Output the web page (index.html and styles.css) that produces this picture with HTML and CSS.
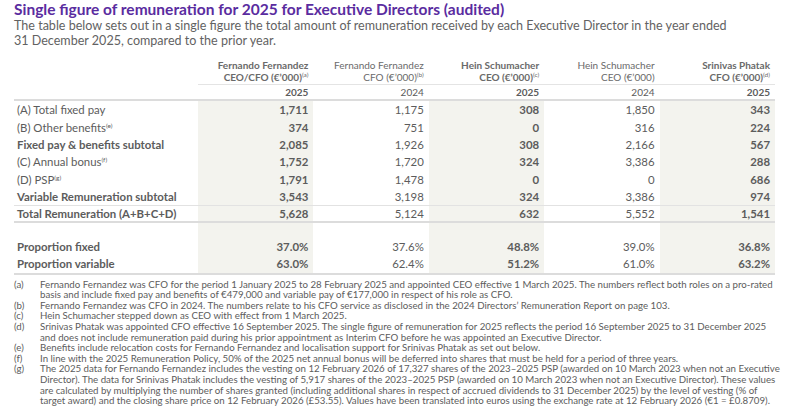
FILE: index.html
```html
<!DOCTYPE html>
<html lang="en">
<head>
<meta charset="utf-8">
<title>Single figure of remuneration</title>
<link rel="stylesheet" href="styles.css">
</head>
<body>
<div class="page">
  <h1 class="title">Single figure of remuneration for 2025 for Executive Directors (audited)</h1>
  <p class="intro">The table below sets out in a single figure the total amount of remuneration received by each Executive Director in the year ended<br>31 December 2025, compared to the prior year.</p>

  <table class="rem">
    <colgroup>
      <col class="c-label"><col><col><col><col><col>
    </colgroup>
    <thead>
      <tr class="names">
        <th class="blank"></th>
        <th class="hd strong">Fernando Fernandez<br>CEO/CFO (€’000)<sup>(a)</sup></th>
        <th class="hd">Fernando Fernandez<br>CFO (€’000)<sup>(b)</sup></th>
        <th class="hd strong">Hein Schumacher<br>CEO (€’000)<sup>(c)</sup></th>
        <th class="hd">Hein Schumacher<br>CEO (€’000)</th>
        <th class="hd strong">Srinivas Phatak<br>CFO (€’000)<sup>(d)</sup></th>
      </tr>
      <tr class="years">
        <th class="blank"></th>
        <th class="yr strong">2025</th>
        <th class="yr">2024</th>
        <th class="yr strong">2025</th>
        <th class="yr">2024</th>
        <th class="yr strong">2025</th>
      </tr>
    </thead>
    <tbody>
      <tr class="row">
        <td class="lbl">(A) Total fixed pay</td>
        <td class="num cur">1,711</td><td class="num">1,175</td><td class="num cur">308</td><td class="num">1,850</td><td class="num cur">343</td>
      </tr>
      <tr class="row">
        <td class="lbl">(B) Other benefits<sup>(e)</sup></td>
        <td class="num cur">374</td><td class="num">751</td><td class="num cur">0</td><td class="num">316</td><td class="num cur">224</td>
      </tr>
      <tr class="row">
        <td class="lbl bold">Fixed pay &amp; benefits subtotal</td>
        <td class="num cur">2,085</td><td class="num">1,926</td><td class="num cur">308</td><td class="num">2,166</td><td class="num cur">567</td>
      </tr>
      <tr class="row">
        <td class="lbl">(C) Annual bonus<sup>(f)</sup></td>
        <td class="num cur">1,752</td><td class="num">1,720</td><td class="num cur">324</td><td class="num">3,386</td><td class="num cur">288</td>
      </tr>
      <tr class="row">
        <td class="lbl">(D) PSP<sup>(g)</sup></td>
        <td class="num cur">1,791</td><td class="num">1,478</td><td class="num cur">0</td><td class="num">0</td><td class="num cur">686</td>
      </tr>
      <tr class="row sub">
        <td class="lbl bold">Variable Remuneration subtotal</td>
        <td class="num cur">3,543</td><td class="num">3,198</td><td class="num cur">324</td><td class="num">3,386</td><td class="num cur">974</td>
      </tr>
      <tr class="row total">
        <td class="lbl bold">Total Remuneration (A+B+C+D)</td>
        <td class="num cur">5,628</td><td class="num">5,124</td><td class="num cur">632</td><td class="num">5,552</td><td class="num cur">1,541</td>
      </tr>
      <tr class="spacer">
        <td></td><td class="cur"></td><td></td><td class="cur"></td><td></td><td class="cur"></td>
      </tr>
      <tr class="row">
        <td class="lbl bold">Proportion fixed</td>
        <td class="num cur">37.0%</td><td class="num">37.6%</td><td class="num cur">48.8%</td><td class="num">39.0%</td><td class="num cur">36.8%</td>
      </tr>
      <tr class="row last">
        <td class="lbl bold">Proportion variable</td>
        <td class="num cur">63.0%</td><td class="num">62.4%</td><td class="num cur">51.2%</td><td class="num">61.0%</td><td class="num cur">63.2%</td>
      </tr>
    </tbody>
  </table>

  <div class="notes">
    <span class="key">(a)</span>
    <span class="txt">Fernando Fernandez was CFO for the period 1 January 2025 to 28 February 2025 and appointed CEO effective 1 March 2025. The numbers reflect both roles on a pro-rated<br>basis and include fixed pay and benefits of €479,000 and variable pay of €177,000 in respect of his role as CFO.</span>
    <span class="key">(b)</span>
    <span class="txt">Fernando Fernandez was CFO in 2024. The numbers relate to his CFO service as disclosed in the 2024 Directors’ Remuneration Report on page 103.</span>
    <span class="key">(c)</span>
    <span class="txt">Hein Schumacher stepped down as CEO with effect from 1 March 2025.</span>
    <span class="key">(d)</span>
    <span class="txt">Srinivas Phatak was appointed CFO effective 16 September 2025. The single figure of remuneration for 2025 reflects the period 16 September 2025 to 31 December 2025<br>and does not include remuneration paid during his prior appointment as Interim CFO before he was appointed an Executive Director.</span>
    <span class="key">(e)</span>
    <span class="txt">Benefits include relocation costs for Fernando Fernandez and localisation support for Srinivas Phatak as set out below.</span>
    <span class="key">(f)</span>
    <span class="txt">In line with the 2025 Remuneration Policy, 50% of the 2025 net annual bonus will be deferred into shares that must be held for a period of three years.</span>
    <span class="key">(g)</span>
    <span class="txt">The 2025 data for Fernando Fernandez includes the vesting on 12 February 2026 of 17,327 shares of the 2023–2025 PSP (awarded on 10 March 2023 when not an Executive<br>Director). The data for Srinivas Phatak includes the vesting of 5,917 shares of the 2023–2025 PSP (awarded on 10 March 2023 when not an Executive Director). These values<br>are calculated by multiplying the number of shares granted (including additional shares in respect of accrued dividends to 31 December 2025) by the level of vesting (% of<br>target award) and the closing share price on 12 February 2026 (£53.55). Values have been translated into euros using the exchange rate at 12 February 2026 (€1 = £0.8709).</span>
  </div>
</div>
</body>
</html>
```

FILE: styles.css
```css
html, body {
  margin: 0;
  padding: 0;
  background: #ffffff;
}

body {
  font-family: Lato, "Liberation Sans", Arial, sans-serif;
  color: #5c5c5c;
}

.page {
  width: 761px;
  padding-left: 14px;
}

.title {
  margin: 0;
  font-size: 15.5px;
  line-height: 18px;
  font-weight: 700;
  color: #5a2ca0;
  white-space: nowrap;
}

.intro {
  margin: 0;
  font-size: 12.55px;
  line-height: 15px;
  color: #626262;
  white-space: nowrap;
}

.rem {
  margin-top: 12px;
  width: 761px;
  border-collapse: collapse;
  table-layout: fixed;
}

.c-label {
  width: 184px;
}

.rem th,
.rem td {
  padding: 0;
  white-space: nowrap;
}

.hd {
  font-size: 10px;
  line-height: 11.5px;
  font-weight: 400;
  color: #6a6a6a;
  text-align: right;
  vertical-align: bottom;
  padding: 0 5px 1px 0 !important;
  border-bottom: 1px solid #e4e4e4;
}

.hd.strong {
  font-weight: 700;
}

.yr {
  font-size: 10px;
  line-height: 14px;
  font-weight: 400;
  color: #5c5c5c;
  text-align: right;
  padding-right: 5px !important;
}

.yr.strong {
  font-weight: 700;
}

.years {
  border-bottom: 2px solid #dcdcdc;
}

sup {
  font-size: 6.5px;
  line-height: 0;
  vertical-align: 4px;
  font-weight: 400;
}

.row td {
  height: 17.4px;
  line-height: 17px;
  font-size: 11.4px;
}

.lbl {
  padding-left: 3px !important;
  color: #5c5c5c;
}

.lbl.bold {
  font-weight: 700;
}

.num {
  text-align: right;
  padding-right: 5px !important;
  color: #5c5c5c;
}

.num.cur {
  font-weight: 700;
}

.cur {
  background: #f3f3ee;
}

.sub {
  border-bottom: 1px solid #e2e2e2;
}

.row.total td {
  height: 15px;
  line-height: 15px;
}

.total {
  border-bottom: 2px solid #dcdcdc;
}

.spacer td {
  height: 14.5px;
}

.last {
  border-bottom: 2px solid #dcdcdc;
}

.notes {
  margin-top: 4px;
  display: grid;
  grid-template-columns: 26px 1fr;
  font-size: 9.7px;
  line-height: 10.6px;
  color: #5c5c5c;
}

.notes .txt {
  white-space: nowrap;
}
```
